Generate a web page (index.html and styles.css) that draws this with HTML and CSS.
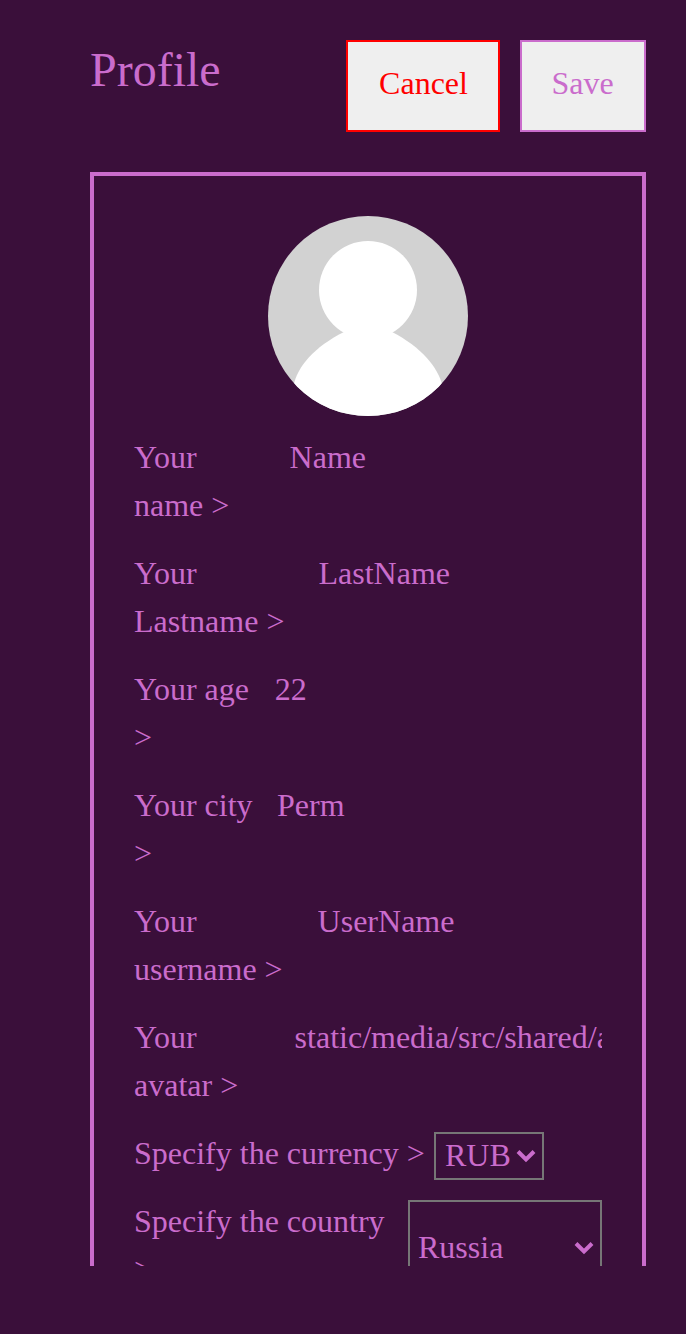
FILE: index.html
```html
<!DOCTYPE html>
<html lang="en">
<head>
<meta charset="utf-8">
<title>Profile</title>
<link rel="stylesheet" href="styles.css">
</head>
<body>
<main class="page">
  <header class="header">
    <h1 class="title">Profile</h1>
    <div class="actions">
      <button class="btn btn-cancel">Cancel</button>
      <button class="btn btn-save">Save</button>
    </div>
  </header>
  <section class="card">
    <svg class="avatar" viewBox="0 0 200 200">
      <clipPath id="round"><circle cx="100" cy="100" r="100"/></clipPath>
      <g clip-path="url(#round)">
        <rect width="200" height="200" fill="#d2d2d2"/>
        <circle cx="100" cy="74" r="49" fill="#fff"/>
        <path d="M76 116C46 131 29 151 25.500 170V200H174.500V170C170 151 153 131 124 116Z" fill="#fff"/>
      </g>
    </svg>
    <div class="row"><span class="label w-name">Your name &gt;</span><span class="value">Name</span></div>
    <div class="row"><span class="label w-last">Your Lastname &gt;</span><span class="value">LastName</span></div>
    <div class="row"><span class="label w-age">Your age &gt;</span><span class="value">22</span></div>
    <div class="row"><span class="label w-city">Your city &gt;</span><span class="value">Perm</span></div>
    <div class="row"><span class="label w-user">Your username &gt;</span><span class="value">UserName</span></div>
    <div class="row"><span class="label w-avatar">Your avatar &gt;</span><span class="value">static/media/src/shared/assets</span></div>
    <div class="row"><span class="label w-currency">Specify the currency &gt;</span>
      <div class="select currency"><span class="option">RUB</span><svg class="chevron" viewBox="0 0 20 14"><path d="M2 2.500L10 10.500L18 2.500"/></svg></div></div>
    <div class="row"><span class="label w-country">Specify the country &gt;</span>
      <div class="select country"><span class="option">Russia</span><svg class="chevron" viewBox="0 0 20 14"><path d="M2 2.500L10 10.500L18 2.500"/></svg></div></div>
  </section>
</main>
</body>
</html>
```
FILE: styles.css
```css
* { box-sizing: border-box; }
html, body { margin: 0; height: 100%; overflow: hidden; background: #3a0f3a; }
body { font-family: "Liberation Serif", "Times New Roman", serif; font-size: 32px; line-height: 48px; color: #ca6ccc; }
.page { height: 1266px; padding: 40px 40px 0 90px; overflow: hidden; }
.header { display: flex; justify-content: space-between; height: 92px; margin-bottom: 40px; }
.title { margin: 0; font-size: 48px; font-weight: 400; line-height: 60px; }
.actions { display: flex; gap: 20px; }
.btn { height: 92px; padding: 0 0 6px; border: 2px solid; background: #efefef; font: inherit; }
.btn-cancel { width: 154px; padding-left: 1px; color: #f00; }
.btn-save { width: 126px; padding-right: 1px; color: #ca6ccc; }
.card { display: flex; flex-direction: column; gap: 20px; height: 1300px; padding: 40px; border: 4px solid #ca6ccc; }
.avatar { flex: none; align-self: center; width: 200px; height: 200px; }
.row { display: flex; flex: none; align-items: flex-start; }
.label { flex: none; margin: -3px 0 3px; }
.value { flex: 1; min-width: 0; margin: -3px 0 3px; overflow: hidden; white-space: nowrap; }
.w-name { width: 155.600px; padding-right: 30px; }
.w-last { width: 184.500px; padding-right: 30px; }
.w-age { width: 140.700px; padding-right: 20px; }
.w-city { width: 143px; padding-right: 20px; }
.w-user { width: 183.600px; padding-right: 30px; }
.w-avatar { width: 160.600px; padding-right: 30px; }
.w-currency { width: 300px; white-space: nowrap; }
.w-country { width: 274px; padding-right: 20px; }
.select { display: flex; flex: none; align-items: center; justify-content: space-between; border: 2px solid #767676; }
.option { margin: -1px 0 1px; }
.currency { width: 110px; height: 48px; padding: 0 6px 0 9px; }
.country { width: 194px; height: 96px; padding: 0 6px 0 8px; }
.chevron { width: 20px; height: 14px; fill: none; stroke: #ca6ccc; stroke-width: 4; }
```
